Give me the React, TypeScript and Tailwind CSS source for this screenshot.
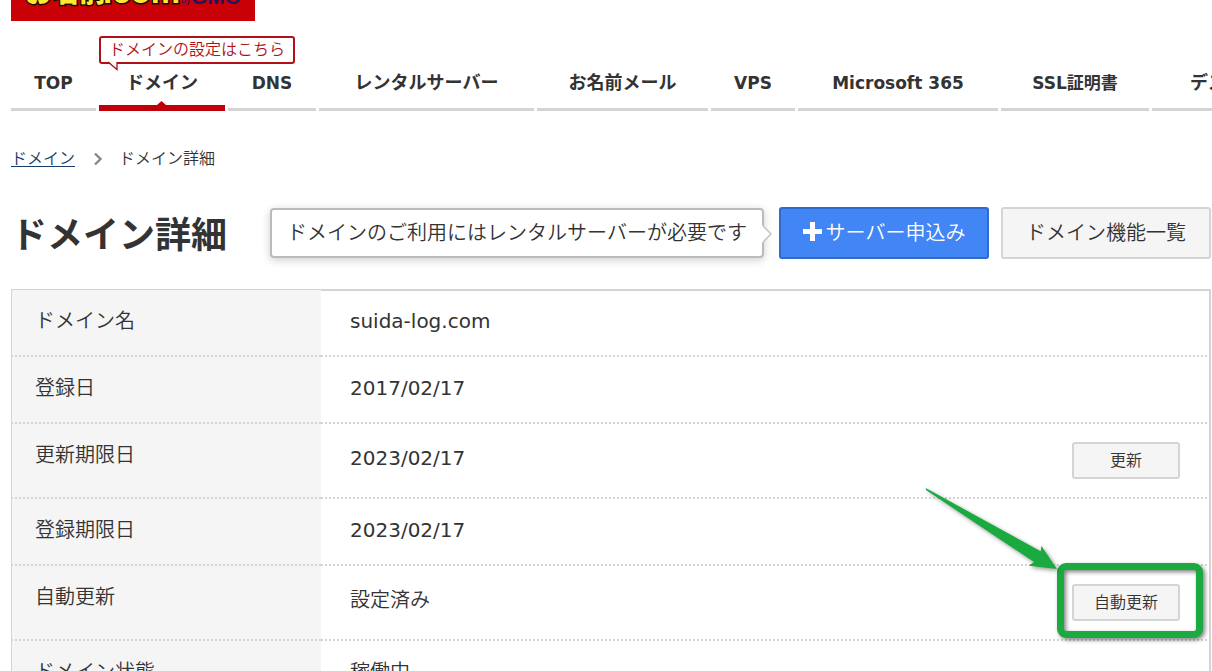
import type { ReactNode } from 'react';

const navItems = [
  { label: 'TOP', className: 'w-[85px] text-[17px]' },
  { label: 'ドメイン', className: 'w-[126px] text-lg', active: true },
  { label: 'DNS', className: 'w-[88px] text-[17px]' },
  { label: 'レンタルサーバー', className: 'w-[215px] text-lg' },
  { label: 'お名前メール', className: 'w-[171px] text-lg' },
  { label: 'VPS', className: 'w-[84px] text-[17px]' },
  { label: 'Microsoft 365', className: 'w-[200px] text-[17px]' },
  { label: 'SSL証明書', className: 'w-[148px] text-[17px]' },
  { label: 'デスクトップクラウド', className: 'w-[256px] text-lg' },
];

const rows = [
  { label: 'ドメイン名', value: 'suida-log.com' },
  { label: '登録日', value: '2017/02/17' },
  { label: '更新期限日', value: '2023/02/17', action: '更新' },
  { label: '登録期限日', value: '2023/02/17' },
  { label: '自動更新', value: '設定済み', action: '自動更新', marked: true },
  { label: 'ドメイン状態', value: '稼働中' },
];

function Logo() {
  return (
    <a href="#" aria-label="お名前.com by GMO" className="block w-[244px] h-[21px] bg-[#c90005] overflow-hidden">
      <svg width="244" height="21" viewBox="0 0 244 21" fontWeight="900">
        <g fill="#ffe633" stroke="#1a1200" strokeWidth="3" paintOrder="stroke">
          <text x="14" y="2" fontSize="27" fontFamily="Noto Sans CJK JP, sans-serif">お名前</text>
          <text x="92" y="3" fontSize="33" fontFamily="Liberation Sans, sans-serif">.com</text>
        </g>
        <g fill="#1d1a5c" fontFamily="Liberation Sans, sans-serif">
          <text x="170" y="3" fontSize="9" fontWeight="400">by</text>
          <text x="180" y="4" fontSize="21">GMO</text>
        </g>
      </svg>
    </a>
  );
}

function NavBalloon() {
  return (
    <div className="absolute left-0 -top-[21px] w-[196px] h-7 border-2 border-[#b01116] rounded-[3px] bg-white flex items-center justify-center text-base leading-6 font-[350] text-[#b01116] whitespace-nowrap">
      ドメインの設定はこちら
      <svg className="absolute left-[6px] top-[23px]" width="12" height="10" viewBox="0 0 12 10">
        <path d="M1 0 L10 8 V0" fill="#fff" />
        <path d="M1 1 L10 8.500 V1" fill="none" stroke="#b01116" strokeWidth="1.300" />
      </svg>
    </div>
  );
}

function GlobalNav() {
  return (
    <nav className="mt-9 flex gap-[3px] font-bold">
      {navItems.map(item => (
        <div key={item.label} className="relative shrink-0">
          <a
            href="#"
            className={`h-[54px] pt-3.5 flex justify-center leading-6 border-[#d4d4d4] ${item.className} ${
              item.active ? '' : 'border-b-[3px]'
            }`}
          >
            {item.label}
          </a>
          {item.active && (
            <>
              <svg className="absolute bottom-0 left-0 w-full" height="10" viewBox="0 0 126 10">
                <path d="M0 4 H58 L62.500 0 L67 4 H126 V10 H0 Z" fill="#bf0008" />
              </svg>
              <NavBalloon />
            </>
          )}
        </div>
      ))}
    </nav>
  );
}

function Breadcrumb() {
  return (
    <div className="mt-9 flex items-center text-base leading-6 font-[350]">
      <a href="#" className="text-[#143c66] underline underline-offset-2">ドメイン</a>
      <svg className="ml-[18px] mr-4" width="10" height="14" viewBox="0 0 10 14">
        <path d="M2 1.500 L7.500 7 L2 12.500" fill="none" stroke="#888" strokeWidth="2.400" />
      </svg>
      <span>ドメイン詳細</span>
    </div>
  );
}

function PageHeader() {
  return (
    <div className="mt-9 flex items-center">
      <h1 className="pt-1.5 text-4xl font-bold whitespace-nowrap">ドメイン詳細</h1>
      <div className="relative ml-auto mr-[15px] w-[494px] h-[50px] border-2 border-[#bbb] rounded-[4px] bg-white shadow-[0_2px_8px_rgba(0,0,0,0.2)] flex items-center justify-center text-xl font-[350] whitespace-nowrap">
        ドメインのご利用にはレンタルサーバーが必要です
        <svg className="absolute left-full top-[14px]" width="11" height="20" viewBox="0 0 11 20">
          <path d="M0 1 L9 10 L0 19" fill="#fff" stroke="#c4c4c4" strokeWidth="1.500" />
          <path d="M0 2 V18" stroke="#fff" strokeWidth="2" />
        </svg>
      </div>
      <button className="w-[210px] h-[52px] shrink-0 border-2 border-[#2f6bc9] rounded-[3px] bg-[#4285f4] text-white text-xl font-[350] flex items-center justify-center gap-1">
        <svg className="mb-1" width="19" height="19" viewBox="0 0 19 19">
          <path d="M7 0 H12 V7 H19 V12 H12 V19 H7 V12 H0 V7 H7 Z" fill="#fff" />
        </svg>
        サーバー申込み
      </button>
      <button className="ml-3 w-[210px] h-[52px] shrink-0 border-2 border-[#d4d4d4] rounded-[3px] bg-[#f5f5f5] text-xl font-[350]">
        ドメイン機能一覧
      </button>
    </div>
  );
}

function ActionButton({ children }: { children: ReactNode }) {
  return (
    <button className="block w-[108px] h-[37px] border-2 border-[#d4d4d4] rounded-[3px] bg-[#f5f5f5] text-base font-[350]">
      {children}
    </button>
  );
}

// Green frame and arrow laid over the button they point at
function Marker() {
  return (
    <div className="pointer-events-none">
      <div className="absolute -left-[15px] -right-[23px] -top-[21px] -bottom-[17px] border-[7px] border-[#1aaa40] rounded-[9px] drop-shadow-[2px_2px_2px_rgba(0,0,0,0.5)]" />
      <svg
        className="absolute -left-[152px] -top-[101px] drop-shadow-[2px_2px_2px_rgba(0,0,0,0.4)]"
        width="140"
        height="90"
        viewBox="0 0 140 90"
      >
        <path d="M5.700 5 L120.700 68.300 L121.300 62.700 L137 86 L108.700 82.700 L114 79 L6.300 7.300 Z" fill="#1aaa40" />
      </svg>
    </div>
  );
}

function DomainTable() {
  return (
    <table className="mt-[30px] w-full border-separate border-spacing-0 text-xl leading-7">
      <tbody>
        {rows.map((row, i) => (
          <tr key={row.label}>
            <th
              scope="row"
              className={`w-[310px] pt-[17px] pl-[23px] align-top text-left font-[350] bg-[#f5f5f5] border-l border-l-[#d4d4d4] border-b-2 border-b-[#d4d4d4] [border-bottom-style:dotted] ${
                i === 0 ? 'border-t border-t-[#d4d4d4]' : ''
              }`}
            >
              {row.label}
            </th>
            <td
              className={`pl-[29px] pr-[29px] border-r-2 border-r-[#d4d4d4] border-b-2 border-b-[#d4d4d4] [border-bottom-style:dotted] ${
                i === 0 ? 'border-t-2 border-t-[#d4d4d4]' : ''
              } ${row.action ? 'py-[18px]' : i === 0 ? 'pt-4 pb-5' : 'pt-[17px] pb-5'}`}
            >
              <div className="flex items-start justify-between">
                <span className={`${row.action ? 'leading-8' : ''} ${/^[\x20-\x7e]+$/.test(row.value) ? 'font-normal' : 'font-[350]'}`}>
                  {row.value}
                </span>
                {row.action && (
                  <div className="relative">
                    <ActionButton>{row.action}</ActionButton>
                    {row.marked && <Marker />}
                  </div>
                )}
              </div>
            </td>
          </tr>
        ))}
      </tbody>
    </table>
  );
}

export default function App() {
  return (
    <div className="h-screen overflow-hidden bg-white pl-[11px] pr-px text-[#333] font-['DejaVu_Sans','Noto_Sans_CJK_JP',sans-serif]">
      <Logo />
      <GlobalNav />
      <main>
        <Breadcrumb />
        <PageHeader />
        <DomainTable />
      </main>
    </div>
  );
}
